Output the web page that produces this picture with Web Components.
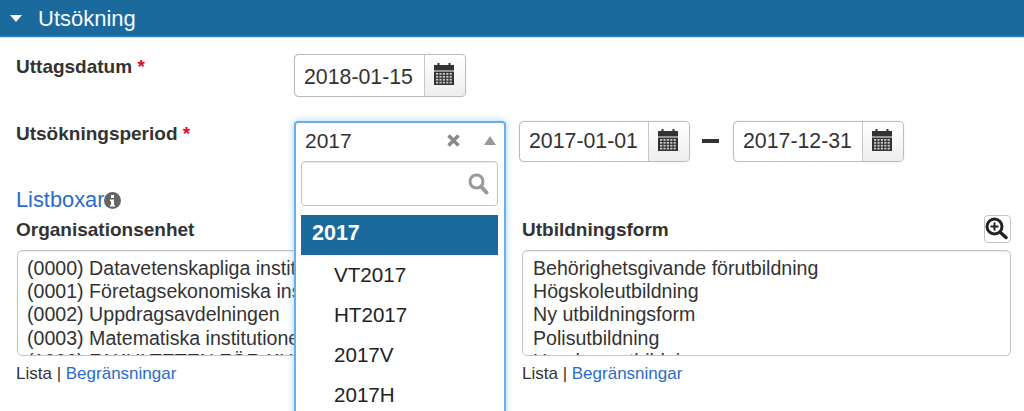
<!DOCTYPE html>
<html lang="sv">
<head>
<meta charset="utf-8">
<title>Utsökning</title>
<style>
    html, body { margin: 0; padding: 0; background: #fff; height: 411px; overflow: hidden; }
    body { font-family: "Liberation Sans", Arial, sans-serif; color: #333; }
    .form { display: block; padding: 0 13px 0 16px; }
    .dash { width: 43px; box-sizing: border-box; display: flex; justify-content: center; padding: 18px 2px 0 0; }
    .dash span { display: block; width: 17px; height: 4px; background: #333; }
    .lists { display: grid; grid-template-columns: 489px 489px; column-gap: 17px; margin-top: 3px; }
</style>
</head>
<body>

<script>
// calendar icon: header with pegs, then 5 x 4 grid of small cells
let calendarCells = '';
for (let row = 0; row < 4; row++) {
    for (let col = 0; col < 5; col++) {
        calendarCells += `<rect x="${2 + col * 3.4}" y="${10 + row * 2.9}" width="2.2" height="1.800" fill="#c9c9c9"/>`;
    }
}
const calendarIcon = `<svg width="20" height="22" viewBox="0 0 20 22"><path fill="#333" d="M3.500 0h2v2h9V0h2v2H20v5.500H0V2h3.500z"/><rect y="8.500" width="20" height="13.500" fill="#333"/>${calendarCells}</svg>`;

class PanelHeader extends HTMLElement {
    constructor() {
        super();
        this.attachShadow({mode: 'open'});
        this.shadowRoot.innerHTML = `
            <style>
                :host { display: flex; align-items: center; height: 36px; padding-left: 10px; background: #1b6a9e;
                    border-bottom: 1px solid #2f86c0; box-shadow: 0 1px 0 #bfe4f7; color: #f4fbff; font-size: 22px; }
                svg { margin-right: 16px; margin-top: 1px; }
                span { padding-top: 1px; }
            </style>
            <svg width="12" height="7" viewBox="0 0 12 7"><path fill="#fff" d="M0 0h12L6 7z"/></svg>
            <span><slot></slot></span>`;
    }
}

class FieldRow extends HTMLElement {
    constructor() {
        super();
        this.attachShadow({mode: 'open'});
        this.shadowRoot.innerHTML = `
            <style>
                :host { display: flex; align-items: flex-start; }
                .label { width: 278px; flex: none; padding-top: 2px; font-size: 19px; line-height: 22px; font-weight: bold; color: #333; }
                .req { color: #e2092b; }
                .controls { display: flex; align-items: flex-start; }
            </style>
            <div class="label"><slot name="label"></slot> <span class="req">*</span></div>
            <div class="controls"><slot></slot></div>`;
    }
}

class DateInput extends HTMLElement {
    constructor() {
        super();
        this.attachShadow({mode: 'open'});
        this.shadowRoot.innerHTML = `
            <style>
                :host { display: inline-flex; height: 41px; box-sizing: border-box; border: 1px solid #bdbdbd; border-radius: 5px;
                    box-shadow: 0 0 1px #bbb; font-size: 21.300px; color: #333; background: #fff; }
                :host([tall]) { height: 43px; }
                :host([tall]) .value { width: 129px; padding-top: 3px; }
                .value { display: flex; align-items: center; box-sizing: border-box; width: 128px; padding-left: 9px; overflow: hidden; white-space: nowrap; }
                .addon { display: flex; align-items: center; justify-content: center; box-sizing: border-box; width: 41px; padding: 0 2px 3px 0; border-left: 1px solid #c8c8c8;
                    background: linear-gradient(#fff, #eee); border-radius: 0 4px 4px 0; }
            </style>
            <div class="value"><slot></slot></div>
            <div class="addon">${calendarIcon}</div>`;
    }
}

class PeriodSelect extends HTMLElement {
    constructor() {
        super();
        this.attachShadow({mode: 'open'});
        this.shadowRoot.innerHTML = `
            <style>
                :host { display: block; position: relative; width: 212px; height: 41px; font-size: 21px; color: #333; }
                .box { display: flex; align-items: center; box-sizing: border-box; height: 38px; padding: 0 8px 3px 9px; }
                .frame { position: absolute; left: 0; top: 0; width: 212px; height: 310px; box-sizing: border-box; background: #fff;
                    border: 2px solid #6aaee6; border-radius: 4px 4px 0 0; box-shadow: 0 0 7px rgba(102,175,233,.6); }
                .value { flex: 1; }
                .clear { margin-right: 24px; }
                .menu { padding: 0 6px 0 5px; }
                .search { display: flex; align-items: center; justify-content: flex-end; box-sizing: border-box; height: 45px; padding-right: 8px;
                    border: 1px solid #c4c4c4; border-radius: 4px; box-shadow: inset 0 1px 1px rgba(0,0,0,.08); }
                ::slotted(.current) { display: block; box-sizing: border-box; height: 40px; line-height: 36px; margin-top: 9px; padding-left: 11px;
                    background: #1b6a9e; color: #fff; font-weight: bold; font-size: 21.500px; }
                ::slotted(.option) { display: block; height: 40px; line-height: 40px; padding-left: 33px; color: #222; font-size: 20.600px; }
            </style>
            <div class="frame">
                <div class="box">
                    <div class="value"><slot name="value"></slot></div>
                    <svg class="clear" width="13" height="13" viewBox="0 0 13 13"><path stroke="#888" stroke-width="3.400" d="M1.500 1.500l10 10M11.500 1.500l-10 10"/></svg>
                    <svg width="12" height="9" viewBox="0 0 12 9"><path fill="#999" d="M6 0l6 9H0z"/></svg>
                </div>
                <div class="menu">
                    <div class="search">
                        <svg width="21" height="22" viewBox="0 0 21 22"><circle cx="8.500" cy="8.500" r="6.500" fill="none" stroke="#999" stroke-width="3"/><path stroke="#999" stroke-width="4" stroke-linecap="round" d="M13.500 14l5 5.500"/></svg>
                    </div>
                    <slot></slot>
                </div>
            </div>`;
    }
}

class ListBox extends HTMLElement {
    constructor() {
        super();
        this.attachShadow({mode: 'open'});
        this.shadowRoot.innerHTML = `
            <style>
                :host { display: block; min-width: 0; }
                .head { display: flex; align-items: flex-end; justify-content: space-between; height: 28px; margin-bottom: 7px; }
                .title { padding-bottom: 2px; font-size: 19px; line-height: 22px; font-weight: bold; color: #333; }
                .list { box-sizing: border-box; height: 106px; margin-left: var(--list-indent, 0); overflow: hidden; padding: 6px 10px 6px var(--list-pad, 10px); border: 1px solid #c4c4c4; border-radius: 5px;
                    box-shadow: inset 0 1px 1px rgba(0,0,0,.08); font-size: 19.600px; line-height: 23.200px; color: #333; white-space: nowrap; }
                .foot { margin-top: 7px; font-size: 17px; line-height: 22px; color: #333; }
                ::slotted(a) { color: #2a6ccb; text-decoration: none; }
                ::slotted(div) { display: block; }
            </style>
            <div class="head">
                <div class="title"><slot name="title"></slot></div>
                <slot name="tool"></slot>
            </div>
            <div class="list"><slot></slot></div>
            <div class="foot">Lista | <slot name="link"></slot></div>`;
    }
}

class ZoomButton extends HTMLElement {
    constructor() {
        super();
        this.attachShadow({mode: 'open'});
        this.shadowRoot.innerHTML = `
            <style>
                :host { display: flex; align-items: center; justify-content: center; box-sizing: border-box; width: 27px; height: 28px;
                    border: 1px solid #c4c4c4; border-radius: 4px; background: #fff; }
                svg { margin: -2px 0 0 -2px; }
            </style>
            <svg width="23" height="23" viewBox="0 0 23 23"><circle cx="9.500" cy="9.500" r="7.500" fill="none" stroke="#222" stroke-width="3"/><path stroke="#222" stroke-width="3.500" stroke-linecap="round" d="M15.500 15.500l5.500 5"/><path stroke="#222" stroke-width="2" d="M5.500 9.500h8M9.500 5.500v8"/></svg>`;
    }
}

class SectionTitle extends HTMLElement {
    constructor() {
        super();
        this.attachShadow({mode: 'open'});
        this.shadowRoot.innerHTML = `
            <style>
                :host { display: flex; align-items: center; font-size: 21.800px; line-height: 24px; color: #2a6ccb; }
            </style>
            <slot></slot>
            <svg width="17" height="17" viewBox="0 0 17 17"><circle cx="8.500" cy="8.500" r="8.500" fill="#666"/><path fill="#fff" d="M7 3h3v3H7zM6 7.500h4v5.500h1v1.500H6V13h1V9H6z"/></svg>`;
    }
}

window.customElements.define('panel-header', PanelHeader);
window.customElements.define('field-row', FieldRow);
window.customElements.define('date-input', DateInput);
window.customElements.define('period-select', PeriodSelect);
window.customElements.define('list-box', ListBox);
window.customElements.define('zoom-button', ZoomButton);
window.customElements.define('section-title', SectionTitle);
</script>

<panel-header>Utsökning</panel-header>

<div class="form">
    <field-row style="margin-top:17px">
        <span slot="label">Uttagsdatum</span>
        <date-input tall>2018-01-15</date-input>
    </field-row>

    <field-row style="margin-top:24px">
        <span slot="label">Utsökningsperiod</span>
        <period-select style="z-index:2">
            <span slot="value">2017</span>
            <span class="current">2017</span>
            <span class="option">VT2017</span>
            <span class="option">HT2017</span>
            <span class="option">2017V</span>
            <span class="option">2017H</span>
        </period-select>
        <date-input style="margin-left:13px">2017-01-01</date-input>
        <div class="dash"><span></span></div>
        <date-input>2017-12-31</date-input>
    </field-row>

    <section-title style="margin-top:26px">Listboxar</section-title>

    <div class="lists">
        <list-box style="--list-indent:1px;--list-pad:9px">
            <span slot="title">Organisationsenhet</span>
            <div>(0000) Datavetenskapliga institutionen</div>
            <div>(0001) Företagsekonomiska institutionen</div>
            <div>(0002) Uppdragsavdelningen</div>
            <div>(0003) Matematiska institutionen</div>
            <div>(1000) FAKULTETEN FÖR KULTUR</div>
            <a slot="link" href="#">Begränsningar</a>
        </list-box>
        <list-box>
            <span slot="title">Utbildningsform</span>
            <zoom-button slot="tool"></zoom-button>
            <div>Behörighetsgivande förutbildning</div>
            <div>Högskoleutbildning</div>
            <div>Ny utbildningsform</div>
            <div>Polisutbildning</div>
            <div>Uppdragsutbildning</div>
            <a slot="link" href="#">Begränsningar</a>
        </list-box>
    </div>
</div>
</body>
</html>
